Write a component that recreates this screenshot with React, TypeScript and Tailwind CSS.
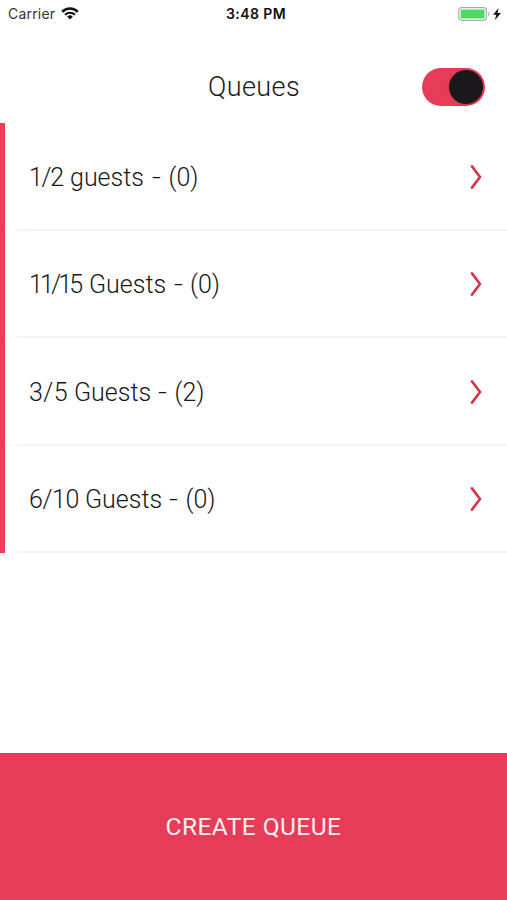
const queues = [
  { size: "1/2", word: "guests", waiting: 0, sizeStyle: "w-[41px] tracking-[-1.3px]", wordStyle: "w-[82px]" },
  { size: "11/15", word: "Guests", waiting: 0, sizeStyle: "w-[60px] tracking-[-2.8px]", wordStyle: "w-[84.5px]" },
  { size: "3/5", word: "Guests", waiting: 2, sizeStyle: "w-[45px] tracking-[0.5px]", wordStyle: "w-[84px]" },
  { size: "6/10", word: "Guests", waiting: 0, sizeStyle: "w-[56px] tracking-[-0.4px]", wordStyle: "w-[84px]" },
];

const WifiIcon = () => (
  <svg viewBox="0 0 18 13" className="w-[18px] h-[13px]" fill="none" stroke="#111">
    <path d="M1.2 4.8a11 11 0 0 1 15.6 0" strokeWidth="2.5" />
    <path d="M4 7.8a7.1 7.1 0 0 1 10 0" strokeWidth="2.2" />
    <path d="M9 12.5 6.2 9.7a4 4 0 0 1 5.6 0Z" fill="#111" stroke="none" />
  </svg>
);

const BatteryIcon = () => (
  <svg viewBox="0 0 44 14" className="w-[44px] h-[14px]">
    <rect x="0.7" y="0.7" width="27.8" height="12.6" rx="3" fill="#fff" stroke="#aaa" strokeWidth="1.2" />
    <rect x="2.6" y="2.6" width="24" height="8.8" rx="1.2" fill="#4cd964" />
    <path d="M30 4.8c1.7.7 1.7 3.7 0 4.4Z" fill="#aaa" />
    <path d="M40.6 1 35 7.8h3.3L36.8 13.2l6.2-7.2h-3.5Z" fill="#111" />
  </svg>
);

const StatusBar = () => (
  <div className="h-[27px] px-2 grid grid-cols-3 items-center font-['Inter','Liberation_Sans',sans-serif] text-[14px] text-[#111]">
    <div className="flex items-center gap-[6px]">
      <span className="text-[#333] tracking-[0.2px]">Carrier</span>
      <WifiIcon />
    </div>
    <span className="text-center text-[14px] font-semibold tracking-[0.4px] ml-[5px]">3:48 PM</span>
    <div className="flex justify-end -mr-[3px]">
      <BatteryIcon />
    </div>
  </div>
);

const Header = () => (
  <header className="h-24 pr-[22px] grid grid-cols-[1fr_auto_1fr] items-center">
    <span />
    <h1 className="text-[27px] font-[350] leading-none tracking-[0.4px] ml-[23px] mt-[25px]">Queues</h1>
    <button
      type="button"
      role="switch"
      aria-checked="true"
      aria-label="Queues open"
      className="justify-self-end mt-[23px] w-[63px] h-[38px] rounded-full bg-[#e63c57] flex items-center justify-end pr-0.5"
    >
      <span className="size-[34px] rounded-full bg-[#1a181a] shadow-sm" />
    </button>
  </header>
);

const Chevron = () => (
  <svg viewBox="0 0 14 26" className="w-[14px] h-[26px]" fill="none" stroke="#d5354a" strokeWidth="2.6" strokeLinecap="round" strokeLinejoin="round">
    <path d="M3 2.4 11 13 3 23.6" />
  </svg>
);

export default function App() {
  return (
    <main className="h-[900px] w-full bg-white flex flex-col text-[#181818] font-['Roboto','Liberation_Sans',sans-serif]">
      <StatusBar />
      <Header />
      <ul className="border-l-[5px] border-[#ed3c5c]">
        {queues.map((queue) => (
          <li key={queue.size} className="h-[107.5px] flex flex-col">
            <div className="flex-1 flex items-center justify-between pl-6 pr-6 pt-[1.5px]">
              <div className="flex text-[25px] font-[350] leading-none whitespace-nowrap pt-px">
                <span className={queue.sizeStyle}>{queue.size}</span>
                <span className={queue.wordStyle}>{queue.word}</span>
                <span className="w-[16.5px] origin-left scale-x-125">-</span>
                <span>({queue.waiting})</span>
              </div>
              <Chevron />
            </div>
            <div className="h-0.5 bg-linear-to-r from-white to-[#f3f3f3] to-[24px]" />
          </li>
        ))}
      </ul>
      <button type="button" className="mt-auto h-[147px] pt-px bg-[#e63c57] text-[24.5px] leading-none text-[#fff0f2] tracking-[0.45px]">
        CREATE QUEUE
      </button>
    </main>
  );
}
